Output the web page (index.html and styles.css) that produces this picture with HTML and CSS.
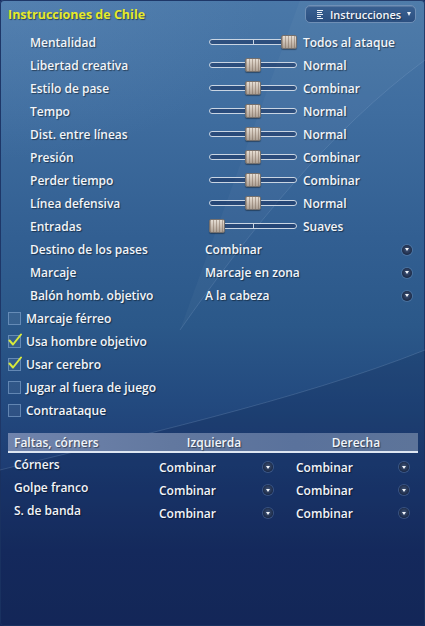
FILE: index.html
```html
<!DOCTYPE html>
<html lang="es">
<head>
<meta charset="utf-8">
<title>Instrucciones de Chile</title>
<link rel="stylesheet" href="styles.css">
</head>
<body>
<div class="panel">
  <svg class="swoosh" viewBox="0 0 425 626" preserveAspectRatio="none" aria-hidden="true">
    <path d="M0 470 C 120 440 300 400 425 350 L 425 626 L 0 626 Z" fill="rgba(8,20,60,0.18)"/>
    <path d="M0 470 C 120 440 300 400 425 350" fill="none" stroke="rgba(190,215,240,0.16)" stroke-width="1"/>
    <path d="M180 330 C 250 230 330 130 425 60" fill="none" stroke="rgba(190,215,240,0.14)" stroke-width="1"/>
    <path d="M180 330 C 250 230 330 130 425 60 L 425 0 L 300 0 Z" fill="rgba(255,255,255,0.03)"/>
  </svg>

  <header class="top">
    <h1 class="title">Instrucciones de Chile</h1>
    <button class="menu-btn" type="button">
      <svg class="menu-icon" viewBox="0 0 7 9" width="7" height="9" aria-hidden="true">
        <rect x="0" y="0" width="6" height="1" fill="#e8eef6"/>
        <rect x="0" y="2" width="5" height="1" fill="#e8eef6"/>
        <rect x="0" y="4" width="6" height="1" fill="#e8eef6"/>
        <rect x="0" y="6" width="4" height="1" fill="#e8eef6"/>
        <rect x="0" y="8" width="6" height="1" fill="#e8eef6"/>
      </svg>
      <span>Instrucciones</span>
      <span class="caret"></span>
    </button>
  </header>

  <div class="list">
    <div class="row"><span class="label">Mentalidad</span><div class="slider"><div class="track"><i class="tick"></i></div><div class="thumb" style="left:72px"></div></div><span class="value">Todos al ataque</span></div>
    <div class="row"><span class="label">Libertad creativa</span><div class="slider"><div class="track"><i class="tick"></i></div><div class="thumb" style="left:36px"></div></div><span class="value">Normal</span></div>
    <div class="row"><span class="label">Estilo de pase</span><div class="slider"><div class="track"><i class="tick"></i></div><div class="thumb" style="left:36px"></div></div><span class="value">Combinar</span></div>
    <div class="row"><span class="label">Tempo</span><div class="slider"><div class="track"><i class="tick"></i></div><div class="thumb" style="left:36px"></div></div><span class="value">Normal</span></div>
    <div class="row"><span class="label">Dist. entre líneas</span><div class="slider"><div class="track"><i class="tick"></i></div><div class="thumb" style="left:36px"></div></div><span class="value">Normal</span></div>
    <div class="row"><span class="label">Presión</span><div class="slider"><div class="track"><i class="tick"></i></div><div class="thumb" style="left:36px"></div></div><span class="value">Combinar</span></div>
    <div class="row"><span class="label">Perder tiempo</span><div class="slider"><div class="track"><i class="tick"></i></div><div class="thumb" style="left:36px"></div></div><span class="value">Combinar</span></div>
    <div class="row"><span class="label">Línea defensiva</span><div class="slider"><div class="track"><i class="tick"></i></div><div class="thumb" style="left:36px"></div></div><span class="value">Normal</span></div>
    <div class="row"><span class="label">Entradas</span><div class="slider"><div class="track"><i class="tick"></i></div><div class="thumb" style="left:0px"></div></div><span class="value">Suaves</span></div>
    <div class="row"><span class="label">Destino de los pases</span><span class="select">Combinar</span><span class="arrow"></span></div>
    <div class="row"><span class="label">Marcaje</span><span class="select">Marcaje en zona</span><span class="arrow"></span></div>
    <div class="row"><span class="label">Balón homb. objetivo</span><span class="select">A la cabeza</span><span class="arrow"></span></div>

    <div class="check-row"><span class="box"></span><span class="check-label">Marcaje férreo</span></div>
    <div class="check-row"><span class="box checked"><svg class="tickmark" viewBox="0 0 14 14" aria-hidden="true"><path d="M1.5 7.5 L5 11.5 L13 1.5" fill="none" stroke="#d8ea3c" stroke-width="2" stroke-linecap="round" stroke-linejoin="round"/></svg></span><span class="check-label">Usa hombre objetivo</span></div>
    <div class="check-row"><span class="box checked"><svg class="tickmark" viewBox="0 0 14 14" aria-hidden="true"><path d="M1.5 7.5 L5 11.5 L13 1.5" fill="none" stroke="#d8ea3c" stroke-width="2" stroke-linecap="round" stroke-linejoin="round"/></svg></span><span class="check-label">Usar cerebro</span></div>
    <div class="check-row"><span class="box"></span><span class="check-label">Jugar al fuera de juego</span></div>
    <div class="check-row"><span class="box"></span><span class="check-label">Contraataque</span></div>
  </div>

  <div class="setpieces">
    <div class="sp-head">
      <span class="sp-h-label">Faltas, córners</span>
      <span class="sp-h-left">Izquierda</span>
      <span class="sp-h-right">Derecha</span>
    </div>
    <div class="sp-row">
      <span class="sp-label">Córners</span>
      <span class="combo combo-left"><span class="combo-text">Combinar</span><span class="arrow"></span></span>
      <span class="combo combo-right"><span class="combo-text">Combinar</span><span class="arrow"></span></span>
    </div>
    <div class="sp-row">
      <span class="sp-label">Golpe franco</span>
      <span class="combo combo-left"><span class="combo-text">Combinar</span><span class="arrow"></span></span>
      <span class="combo combo-right"><span class="combo-text">Combinar</span><span class="arrow"></span></span>
    </div>
    <div class="sp-row">
      <span class="sp-label">S. de banda</span>
      <span class="combo combo-left"><span class="combo-text">Combinar</span><span class="arrow"></span></span>
      <span class="combo combo-right"><span class="combo-text">Combinar</span><span class="arrow"></span></span>
    </div>
  </div>
</div>
</body>
</html>
```

FILE: styles.css
```css
* { box-sizing: border-box; }

html, body {
  margin: 0;
  padding: 0;
  background: #172a5f;
}

body {
  width: 425px;
  height: 626px;
  overflow: hidden;
  font-family: "Open Sans", "DejaVu Sans", sans-serif;
  font-weight: 600;
  font-size: 12px;
  color: #f2f5f9;
}

.panel {
  position: relative;
  width: 425px;
  height: 626px;
  overflow: hidden;
  border-radius: 4px;
  box-shadow: inset 0 0 0 1px #1e3768;
  background:
    radial-gradient(ellipse 260px 160px at 0 0, rgba(120,160,205,0.22), rgba(120,160,205,0) 100%),
    linear-gradient(180deg, #4a78a8 0%, #3f6d9f 18%, #325f92 38%, #2b5889 52%, #234a7f 64%, #1d3b72 76%, #182e63 88%, #172a5e 100%);
}

.swoosh {
  position: absolute;
  inset: 0;
  width: 100%;
  height: 100%;
  pointer-events: none;
}

.top, .list, .setpieces { position: relative; }

/* header */
.top {
  display: flex;
  justify-content: space-between;
  align-items: flex-start;
  height: 31px;
  padding: 5px 9px 0 8px;
}

.title {
  margin: 0;
  font-size: 12.5px;
  font-weight: 700;
  line-height: 20px;
  color: #e6ea2a;
  text-shadow: 1px 1px 1px rgba(0,0,0,0.45);
}

.menu-btn {
  display: flex;
  align-items: center;
  gap: 6px;
  height: 18px;
  width: 111px;
  padding: 0 8px 0 11px;
  border: 1px solid #6f8fb6;
  border-radius: 5px;
  background: linear-gradient(180deg, #3a6192 0%, #2b4f80 100%);
  box-shadow: inset 0 1px 0 rgba(255,255,255,0.15);
  font-family: "Open Sans", "DejaVu Sans", sans-serif;
  font-weight: 600;
  font-size: 11px;
  color: #f2f5f9;
  text-shadow: 1px 1px 1px rgba(0,0,0,0.4);
}

.menu-icon { flex: none; }

.caret {
  margin-left: auto;
  width: 0;
  height: 0;
  border-left: 2.5px solid transparent;
  border-right: 2.5px solid transparent;
  border-top: 4px solid #e8eef6;
}

/* rows */
.list {
  display: flex;
  flex-direction: column;
}

.row {
  display: flex;
  align-items: center;
  height: 23px;
}

.label {
  width: 205px;
  padding-left: 30px;
  text-shadow: 1px 1px 1px rgba(0,0,0,0.45);
}

.value, .select, .check-label, .sp-label, .combo-text, .sp-head span {
  text-shadow: 1px 1px 1px rgba(0,0,0,0.45);
}

.slider {
  position: relative;
  display: flex;
  align-items: center;
  width: 88px;
  height: 23px;
  margin-left: 4px;
}

.track {
  position: relative;
  width: 88px;
  height: 6px;
  margin-top: -1px;
  border: 1px solid #c9d5e3;
  border-radius: 3px;
  background: rgba(25,50,95,0.55);
}

.tick {
  position: absolute;
  left: 43px;
  top: -1px;
  width: 1px;
  height: 6px;
  background: #c9d5e3;
}

.thumb {
  position: absolute;
  top: 4px;
  width: 16px;
  height: 14px;
  border: 1px solid #74706e;
  border-radius: 2px;
  background:
    repeating-linear-gradient(90deg, rgba(120,100,85,0.45) 0 1px, rgba(0,0,0,0) 1px 3px),
    linear-gradient(180deg, #e6ded4 0%, #cbbfb3 50%, #aca094 100%);
  box-shadow: 0 1px 1px rgba(0,0,0,0.35);
}

.value { margin-left: 6px; }

.select { flex: 1; }

.arrow {
  position: relative;
  flex: none;
  width: 10px;
  height: 10px;
  margin-right: 13px;
  border-radius: 50%;
  background: radial-gradient(circle at 50% 45%, #40557a 0%, #1a2742 75%);
  box-shadow: 0 0 0 1px rgba(140,165,200,0.3);
}

.arrow::after {
  content: "";
  position: absolute;
  left: 2.5px;
  top: 3.5px;
  border-left: 2.5px solid transparent;
  border-right: 2.5px solid transparent;
  border-top: 3px solid #f4f7fb;
}

/* checkboxes */
.check-row {
  display: flex;
  align-items: center;
  gap: 5px;
  height: 23px;
  padding-left: 8px;
}

.box {
  position: relative;
  flex: none;
  width: 13px;
  height: 13px;
  border: 1px solid rgba(140,175,215,0.55);
  background: rgba(255,255,255,0.06);
}

.tickmark {
  position: absolute;
  left: -1px;
  top: -3px;
  width: 14px;
  height: 14px;
}

/* set pieces table */
.setpieces {
  margin: 11px 7px 0 8px;
}

.sp-head {
  display: grid;
  grid-template-columns: 143px 137px 1fr;
  align-items: center;
  height: 20px;
  border-bottom: 2px solid #dde6f2;
  background: linear-gradient(90deg, #7084ad 0%, #62789f 40%, #5a729c 70%, #5d7499 100%);
}

.sp-h-label { padding-left: 6px; }
.sp-h-left { text-align: center; padding-right: 11px; }
.sp-h-right { text-align: center; padding-left: 6px; }

.sp-row {
  display: grid;
  grid-template-columns: 143px 137px 1fr;
  align-items: center;
  height: 23px;
}

.sp-label { padding-left: 6px; }

.combo {
  display: flex;
  align-items: center;
  padding-top: 5px;
  padding-left: 8px;
}

.combo-text { flex: 1; }

.combo-left .arrow { margin-right: 15px; }
.combo-right .arrow { margin-right: 9px; }
```
